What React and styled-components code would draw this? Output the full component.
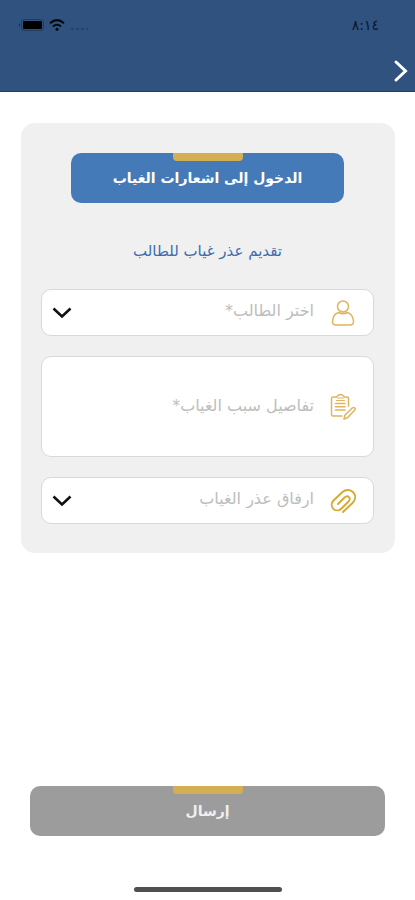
import React from 'react';
import styled, { createGlobalStyle } from 'styled-components';

const GlobalStyle = createGlobalStyle`
    * {
        box-sizing: border-box;
    }
    body {
        margin: 0;
        background: #ffffff;
        font-family: "DejaVu Sans", sans-serif;
    }
    button, select, textarea {
        font-family: inherit;
        margin: 0;
    }
`;

const Page = styled.div`
    display: flex;
    flex-direction: column;
    min-height: 100vh;
`;

const Header = styled.header`
    background: #2f527f;
    border-bottom: 1px solid #17427a;
`;

const StatusBar = styled.div`
    display: flex;
    justify-content: space-between;
    align-items: center;
    height: 50px;
    padding: 0 36px 0 18px;
    color: #0b1526;
`;

const Time = styled.span`
    font-size: 14px;
`;

const StatusIcons = styled.div`
    display: flex;
    align-items: center;
    gap: 5px;
`;

const NavBar = styled.nav`
    display: flex;
    height: 41px;
    padding: 0 6px;
`;

const BackButton = styled.button`
    display: flex;
    align-items: center;
    padding: 0;
    border: none;
    background: none;
`;

const Card = styled.main`
    margin: 31px 20px 0 21px;
    padding: 30px 21px 29px 20px;
    border-radius: 14px;
    background: #f0f0f0;
`;

const ActionButton = styled.button`
    display: flex;
    flex-direction: column;
    align-items: center;
    width: 100%;
    height: 50px;
    padding: 0;
    border: none;
    border-radius: 10px;
    background: ${props => props.tone === "muted" ? "#9c9c9c" : "#457ab8"};
    color: ${props => props.tone === "muted" ? "#f0f0f0" : "#ffffff"};
    font-size: 14px;
    font-weight: bold;
    line-height: 34px;

    &::before {
        content: "";
        width: 70px;
        height: 8px;
        border-radius: 0 0 4px 4px;
        background: #d3ae52;
    }
`;

const EntryRow = styled.div`
    padding: 0 30px;
`;

const Title = styled.h1`
    margin: 36px 0 26px;
    color: #3c6cab;
    font-size: 15px;
    font-weight: normal;
    line-height: 24px;
    text-align: center;
`;

const Form = styled.form`
    display: flex;
    flex-direction: column;
    gap: 20px;
`;

const Field = styled.label`
    display: flex;
    align-items: center;
    gap: 16px;
    padding: 0 17px 0 10px;
    border: 1px solid #d9d9d9;
    border-radius: 10px;
    background: #ffffff;
`;

const Select = styled.select`
    flex: 1;
    min-width: 0;
    height: 45px;
    padding: 0 0 4px;
    border: none;
    background: none;
    appearance: none;
    color: #bdbdbd;
    font-size: 16px;
`;

const TextArea = styled.textarea`
    flex: 1;
    min-width: 0;
    height: 99px;
    padding: 38px 0;
    border: none;
    background: none;
    resize: none;
    font-size: 16px;
    line-height: 22px;

    &::placeholder {
        color: #bdbdbd;
        opacity: 1;
    }
`;

const Footer = styled.footer`
    display: flex;
    flex-direction: column;
    align-items: center;
    gap: 51px;
    margin-top: auto;
    padding: 30px 30px 8px;
`;

const HomeBar = styled.div`
    width: 148px;
    height: 5px;
    border-radius: 3px;
    background: #505050;
`;

const GoldIcon = styled.svg`
    flex: none;
    width: 26px;
    height: 28px;
    fill: none;
    stroke: ${props => props.$tone || "#dfb45c"};
    stroke-width: ${props => props.$weight || 1.5};
    stroke-linecap: round;
    stroke-linejoin: round;
`;

const UserIcon = () => (
    <GoldIcon viewBox="0 0 26 28" aria-hidden="true">
        <circle cx="13" cy="7.500" r="5.500" />
        <path d="M8.500 13.500C4.800 14.500 3 18 2.500 22C2.300 24.800 3.500 26 6 26H20C22.500 26 23.700 24.800 23.500 22C23 18 21.200 14.500 17.500 13.500C14.500 15 11.500 15 8.500 13.500Z" />
    </GoldIcon>
);

const NoteIcon = () => (
    <GoldIcon viewBox="0 0 26 28" aria-hidden="true">
        <path d="M18.500 13V5.500Q18.500 4 17 4H14.500L13 2.500Q10.500 0.500 8 2.500L6.500 4H3Q1.500 4 1.500 5.500V21.500Q1.500 23 3 23H12" />
        <path d="M6.500 7.500H14.500M7.500 5H13.500" strokeWidth="1" />
        <path d="M5.500 10.500H15M5.500 13.700H15M5.500 17H15" />
        <path d="M14 26L15 22L22.300 15C24.300 13.500 26 15.500 24.600 17.200L17.500 24.800Z" />
    </GoldIcon>
);

const ClipIcon = () => (
    <GoldIcon viewBox="0 0 26 28" $tone="#d6a932" $weight={1.9} aria-hidden="true">
        <path d="M13 25L22.500 16C30 8 20 -1 12.500 5L3.500 13.500C-2 19.500 6 27 11.500 21.500L18.500 14.500C21.500 11 18 7.500 14.500 10.500L8 17" />
    </GoldIcon>
);

const Chevron = () => (
    <svg width="20" height="12" viewBox="0 0 20 12" fill="none" stroke="#111111" strokeWidth="2.600" aria-hidden="true">
        <path d="M1.500 1.500L10 9.500L18.500 1.500" />
    </svg>
);

const Battery = () => (
    <svg width="26" height="12" viewBox="0 0 26 12" aria-hidden="true">
        <rect x="3.500" y="0.500" width="22" height="11" rx="2.500" fill="none" stroke="#223c60" />
        <rect x="5" y="2" width="19" height="8" rx="1" fill="#000000" />
        <path d="M2 4Q0 6 2 8Z" fill="#17294a" />
    </svg>
);

const Wifi = () => (
    <svg width="16" height="12" viewBox="0 0 16 12" fill="none" stroke="#05080f" strokeWidth="2" aria-hidden="true">
        <path d="M1 4.300Q8 -2 15 4.300M4 7.500Q8 4 12 7.500" />
        <circle cx="8" cy="10.300" r="1.500" fill="#05080f" stroke="none" />
    </svg>
);

const Signal = () => (
    <svg width="20" height="12" viewBox="0 0 20 12" fill="#23426c" aria-hidden="true">
        <path d="M1 9h3v2h-3zM6 9h3v2h-3zM11 9h3v2h-3zM16 9h2v2h-2z" />
    </svg>
);

const App = () => {
    return (
        <Page dir="rtl" lang="ar">
            <GlobalStyle />
            <Header>
                <StatusBar>
                    <Time>٨:١٤</Time>
                    <StatusIcons>
                        <Signal />
                        <Wifi />
                        <Battery />
                    </StatusIcons>
                </StatusBar>
                <NavBar>
                    <BackButton type="button" aria-label="رجوع">
                        <svg width="16" height="24" viewBox="0 0 16 24" fill="none" stroke="#ffffff" strokeWidth="3" strokeLinecap="round" aria-hidden="true">
                            <path d="M3 3L12.500 12L3 21" />
                        </svg>
                    </BackButton>
                </NavBar>
            </Header>
            <Card>
                <EntryRow>
                    <ActionButton type="button">الدخول إلى اشعارات الغياب</ActionButton>
                </EntryRow>
                <Title>تقديم عذر غياب للطالب</Title>
                <Form id="absence">
                    <Field>
                        <UserIcon />
                        <Select aria-label="اختر الطالب">
                            <option>اختر الطالب*</option>
                        </Select>
                        <Chevron />
                    </Field>
                    <Field>
                        <NoteIcon />
                        <TextArea aria-label="تفاصيل سبب الغياب" placeholder="تفاصيل سبب الغياب*" />
                    </Field>
                    <Field>
                        <ClipIcon />
                        <Select aria-label="ارفاق عذر الغياب">
                            <option>ارفاق عذر الغياب</option>
                        </Select>
                        <Chevron />
                    </Field>
                </Form>
            </Card>
            <Footer>
                <ActionButton type="submit" form="absence" tone="muted">إرسال</ActionButton>
                <HomeBar />
            </Footer>
        </Page>
    );
};

export default App;
